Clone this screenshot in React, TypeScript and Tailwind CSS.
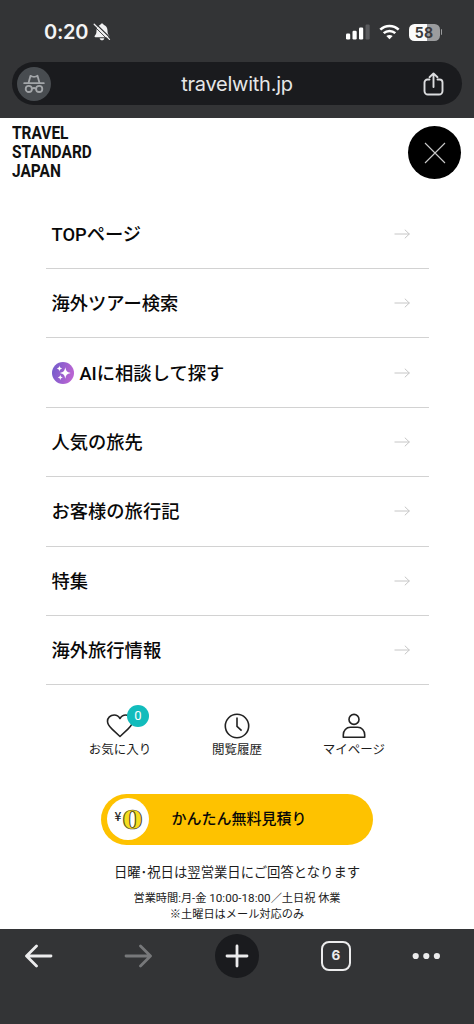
import React from "react";

function BellOff() {
  return (
    <svg width="18" height="20" viewBox="0 0 18 20" className="ml-[5px]">
      <path d="M9 1.4c-.9 0-1.500.6-1.600 1.400C4.700 3.600 3.500 6 3.500 8.600c0 3-.6 4-1.700 5.100-.5.5-.3 1.500.6 1.500h13.200c.9 0 1.100-1 .6-1.500-1.100-1.100-1.700-2.100-1.700-5.100 0-2.600-1.200-5-3.900-5.800C10.500 2 9.900 1.400 9 1.400z" fill="#f1f1f2" />
      <path d="M6.700 16.200h4.600c-.2 1.300-1.100 2.100-2.300 2.100s-2.100-.8-2.300-2.100z" fill="#f1f1f2" />
      <path d="M2.200 1.200L17.800 16.400" stroke="#333436" strokeWidth="1.300" />
      <path d="M1.200 2.200L16.500 17.400" stroke="#f1f1f2" strokeWidth="1.300" strokeLinecap="round" />
      <path d="M.2 3.200L15.600 18.500" stroke="#333436" strokeWidth=".9" />
    </svg>
  );
}

function StatusIcons() {
  return (
    <div className="flex items-center">
      <svg width="24" height="16" viewBox="0 0 24 16">
        <rect x="0" y="9.500" width="4.200" height="6" rx="1.200" fill="#fff" />
        <rect x="6.500" y="6.700" width="4.200" height="8.800" rx="1.200" fill="#fff" />
        <rect x="13" y="3.500" width="4.200" height="12" rx="1.200" fill="#fff" />
        <rect x="19.500" y=".5" width="4.200" height="15" rx="1.200" fill="#5a5b5e" />
      </svg>
      <svg width="21" height="16" viewBox="0 0 21 16" className="ml-[9px]" fill="none" stroke="#fff" strokeWidth="2.500">
        <path d="M1.300 5.700C6.500.6 14.500.6 19.700 5.700" />
        <path d="M4.700 9.200c3.300-3.100 8.300-3.100 11.600 0" />
        <path d="M7.300 12.100c1.800-1.600 4.600-1.600 6.400 0L10.500 15.300z" fill="#fff" stroke="none" />
      </svg>
      <div className="ml-[9px] flex h-[17px] w-[31px] items-center justify-center rounded-[5.500px] bg-[linear-gradient(90deg,#fbfbfb_58%,#9b9c9e_58%)] pt-[1px] font-['Inter'] text-[14px] font-bold leading-none tracking-[0.3px] text-[#3a3b3d]">
        58
      </div>
      <div className="ml-[1px] h-[6px] w-[1.500px] rounded-r-full bg-[#9b9c9e]" />
    </div>
  );
}

function Incognito() {
  return (
    <div className="flex size-[34px] items-center justify-center rounded-full bg-[#484c50]">
      <svg width="22" height="20" viewBox="0 0 22 20" fill="none" stroke="#a3a6a9" strokeWidth="1.800" strokeLinejoin="round" strokeLinecap="round">
        <path d="M1.200 9.200h19.600" />
        <path d="M5.500 9L7.500 1.800l1.800.7c1.100.4 2.300.4 3.400 0l1.800-.7L16.500 9" />
        <circle cx="5.800" cy="14.900" r="3.100" />
        <circle cx="16.200" cy="14.900" r="3.100" />
        <path d="M8.900 14.700c1.300-.9 2.900-.9 4.200 0" />
      </svg>
    </div>
  );
}

function Sparkle() {
  return (
    <svg width="22" height="22" viewBox="0 0 22 22" className="mb-[2px] mr-[6px] shrink-0">
      <defs>
        <linearGradient id="ai" x1="0" y1="0" x2="1" y2="0.300">
          <stop offset="0" stopColor="#6e5bcb" />
          <stop offset="1" stopColor="#b964d2" />
        </linearGradient>
      </defs>
      <circle cx="11" cy="11" r="11" fill="url(#ai)" />
      <path d="M13.300 5.300c.8 3.800 1.500 4.700 5.400 5.700-3.900 1-4.600 1.900-5.400 5.700-.8-3.800-1.500-4.700-5.400-5.700 3.900-1 4.600-1.900 5.400-5.700z" fill="#fff" />
      <path d="M7.500 3.600c.4 2 .8 2.400 2.700 2.900-1.900.5-2.300.9-2.700 2.900-.4-2-.8-2.400-2.700-2.900 1.900-.5 2.300-.9 2.700-2.900zM8.300 12.800c.4 1.800.7 2.200 2.500 2.700-1.800.5-2.100.9-2.500 2.700-.4-1.800-.7-2.200-2.500-2.700 1.800-.5 2.100-.9 2.500-2.700z" fill="#fff" />
    </svg>
  );
}

const menu = ["TOPページ", "海外ツアー検索", "AIに相談して探す", "人気の旅先", "お客様の旅行記", "特集", "海外旅行情報"];

function MenuRow({ label }: { label: string }) {
  return (
    <li className="flex h-[69.400px] items-center justify-between border-b-[1.500px] border-[#d2d2d2] pl-[5.500px] pr-[18.500px]">
      <span className="flex items-center pt-[2px] font-['Roboto','Noto_Sans_CJK_JP',sans-serif] text-[18.300px] font-medium leading-none text-[#080808]">
        {label.startsWith("AI") && <Sparkle />}
        {label}
      </span>
      <svg width="16" height="10" viewBox="0 0 16 10" fill="none" stroke="#c6c6c6" strokeWidth="1">
        <path d="M.5 5h15M10.800.7L15.300 5l-4.500 4.300" />
      </svg>
    </li>
  );
}

function Shortcut({ label, children }: { label: string; children: React.ReactNode }) {
  return (
    <div className="flex w-[117px] flex-col items-center">
      <div className="relative flex h-[28px] items-center justify-center">{children}</div>
      <span className="whitespace-nowrap text-[12.500px] leading-[18px] text-[#1c1c1c]">{label}</span>
    </div>
  );
}

export default function App() {
  return (
    <div className="flex h-[1024px] w-[474px] flex-col overflow-hidden bg-white font-['Noto_Sans_CJK_JP',sans-serif]">
      <header className="h-[118px] shrink-0 bg-[#333436]">
        <div className="flex h-[62px] items-center justify-between pl-[44px] pr-[32px] pt-[2px]">
          <div className="flex items-center">
            <span className="font-['Inter'] text-[20px] font-semibold leading-none tracking-[-0.300px] text-[#f4f4f5]">0:20</span>
            <BellOff />
          </div>
          <StatusIcons />
        </div>
        <div className="mx-[12px] flex h-[43px] items-center justify-between rounded-full bg-[#1a1b1e] pl-[5px] pr-[18px]">
          <Incognito />
          <span className="font-['Inter'] text-[20px] leading-none tracking-[-0.250px] text-[#e6e7e8]">travelwith.jp</span>
          <svg width="21" height="24" viewBox="0 0 21 24" fill="none" stroke="#dcdddf" strokeWidth="1.900" strokeLinecap="round" strokeLinejoin="round">
            <path d="M6.500 7.500H4.500a3 3 0 0 0-3 3V19a3.500 3.500 0 0 0 3.500 3.500h11a3.500 3.500 0 0 0 3.500-3.500v-8.500a3 3 0 0 0-3-3h-2" />
            <path d="M10.500 15V1.700M6.500 5.200l4-3.800 4 3.800" />
          </svg>
        </div>
      </header>

      <main className="flex h-[811px] shrink-0 flex-col">
        <div className="flex h-[81.700px] items-start justify-between pl-[12px] pr-[13px] pt-[5px]">
          <h1 className="origin-left scale-x-[0.870] font-['Roboto'] text-[17.800px] font-bold leading-[19px] text-[#111]">
            TRAVEL
            <br />
            STANDARD
            <br />
            JAPAN
          </h1>
          <button className="mt-[3px] flex size-[53px] items-center justify-center rounded-full bg-black">
            <svg width="22" height="22" viewBox="0 0 22 22" stroke="#c9c9c9" strokeWidth="1.100">
              <path d="M1 1l20 20M21 1L1 21" />
            </svg>
          </button>
        </div>

        <ul className="ml-[46px] w-[382.500px]">
          {menu.map((label) => (
            <MenuRow key={label} label={label} />
          ))}
        </ul>

        <div className="mt-[26.500px] flex justify-center">
          <Shortcut label="お気に入り">
            <svg width="28" height="25" viewBox="0 0 28 25" fill="none" stroke="#222" strokeWidth="1.600" strokeLinejoin="round">
              <path d="M14 5.500C12.600 3 10.500 2 8.200 2c-4 0-6.700 2.800-6.700 6.300 0 3.100 1.800 5.200 4.600 7.900L14 23.500l7.900-7.300c2.800-2.700 4.600-4.800 4.600-7.900C26.500 4.800 23.800 2 19.800 2c-2.300 0-4.400 1-5.800 3.500z" />
            </svg>
            <span className="absolute -top-[7px] left-[21px] flex size-[22px] items-center justify-center rounded-full bg-[#12bcbc] font-['Roboto'] text-[13px] leading-none text-white">0</span>
          </Shortcut>
          <Shortcut label="閲覧履歴">
            <svg width="26" height="26" viewBox="0 0 26 26" fill="none" stroke="#222" strokeWidth="1.600">
              <circle cx="13" cy="13" r="11.700" />
              <path d="M13 4.500V13.400l4.600 4.200" />
            </svg>
          </Shortcut>
          <Shortcut label="マイページ">
            <svg width="24" height="26" viewBox="0 0 24 26" fill="none" stroke="#222" strokeWidth="1.600" strokeLinejoin="round">
              <circle cx="12" cy="6.400" r="5" />
              <path d="M1.300 24.300v-2.500c0-4.300 3-7.500 7-7.500h7.400c4 0 7 3.200 7 7.500v2.500z" />
            </svg>
          </Shortcut>
        </div>

        <button className="ml-[101px] mt-[36px] flex h-[51px] w-[272px] shrink-0 items-center rounded-full bg-[#fec200] pl-[6px]">
          <span className="flex size-[42px] shrink-0 items-center justify-center rounded-full bg-white">
            <svg width="42" height="42" viewBox="0 0 42 42">
              <text x="7.500" y="23" fontFamily="Noto Sans CJK JP" fontWeight="500" fontSize="12" fill="#222">¥</text>
              <text transform="translate(25.500 31) scale(1.450 1)" x="0" y="0" textAnchor="middle" fontFamily="Liberation Serif" fontWeight="700" fontSize="29" fill="#f7dc1e" stroke="#4b431c" strokeWidth=".7">0</text>
            </svg>
          </span>
          <span className="mb-[3px] ml-[22.500px] whitespace-nowrap text-[15px] font-medium leading-none text-[#080808]">かんたん無料見積り</span>
        </button>
        <p className="mt-[17px] text-center text-[13.350px] leading-[20px] text-[#1c1c1c]">日曜･祝日は翌営業日にご回答となります</p>
        <p className="mt-[8px] text-center font-['Roboto','Noto_Sans_CJK_JP',sans-serif] text-[11.200px] leading-[16px] text-[#1c1c1c]">
          営業時間:月-金 <span className="text-[11.700px]">10:00-18:00</span>／土日祝 休業
          <br />
          ※土曜日はメール対応のみ
        </p>
      </main>

      <footer className="flex h-[95px] shrink-0 items-start bg-[#333436] pl-[25px] pt-[5px]">
        <svg width="28" height="44" viewBox="0 0 28 44" fill="none" stroke="#ececed" strokeWidth="2.800" strokeLinecap="round" strokeLinejoin="round">
          <path d="M26 22H1.700M11.500 12L1.500 22l10 10" />
        </svg>
        <svg width="28" height="44" viewBox="0 0 28 44" className="ml-[71px]" fill="none" stroke="#77787a" strokeWidth="2.800" strokeLinecap="round" strokeLinejoin="round">
          <path d="M2 22h24.300M16.500 12l10 10-10 10" />
        </svg>
        <div className="ml-[63px] flex size-[44px] items-center justify-center rounded-full bg-[#1a1b1e]">
          <svg width="24" height="24" viewBox="0 0 24 24" stroke="#ececed" strokeWidth="2.800" strokeLinecap="round">
            <path d="M12 2v20M2 12h20" />
          </svg>
        </div>
        <div className="ml-[62px] mt-[7px] flex size-[30px] items-center justify-center rounded-[8px] border-[2.500px] border-[#ececed] font-['Inter'] text-[13.500px] font-bold leading-none text-[#ececed]">6</div>
        <svg width="28" height="44" viewBox="0 0 28 44" className="ml-[61px]" fill="#ececed">
          <circle cx="3.700" cy="22" r="3.100" />
          <circle cx="14.300" cy="22" r="3.100" />
          <circle cx="24.900" cy="22" r="3.100" />
        </svg>
      </footer>
    </div>
  );
}
